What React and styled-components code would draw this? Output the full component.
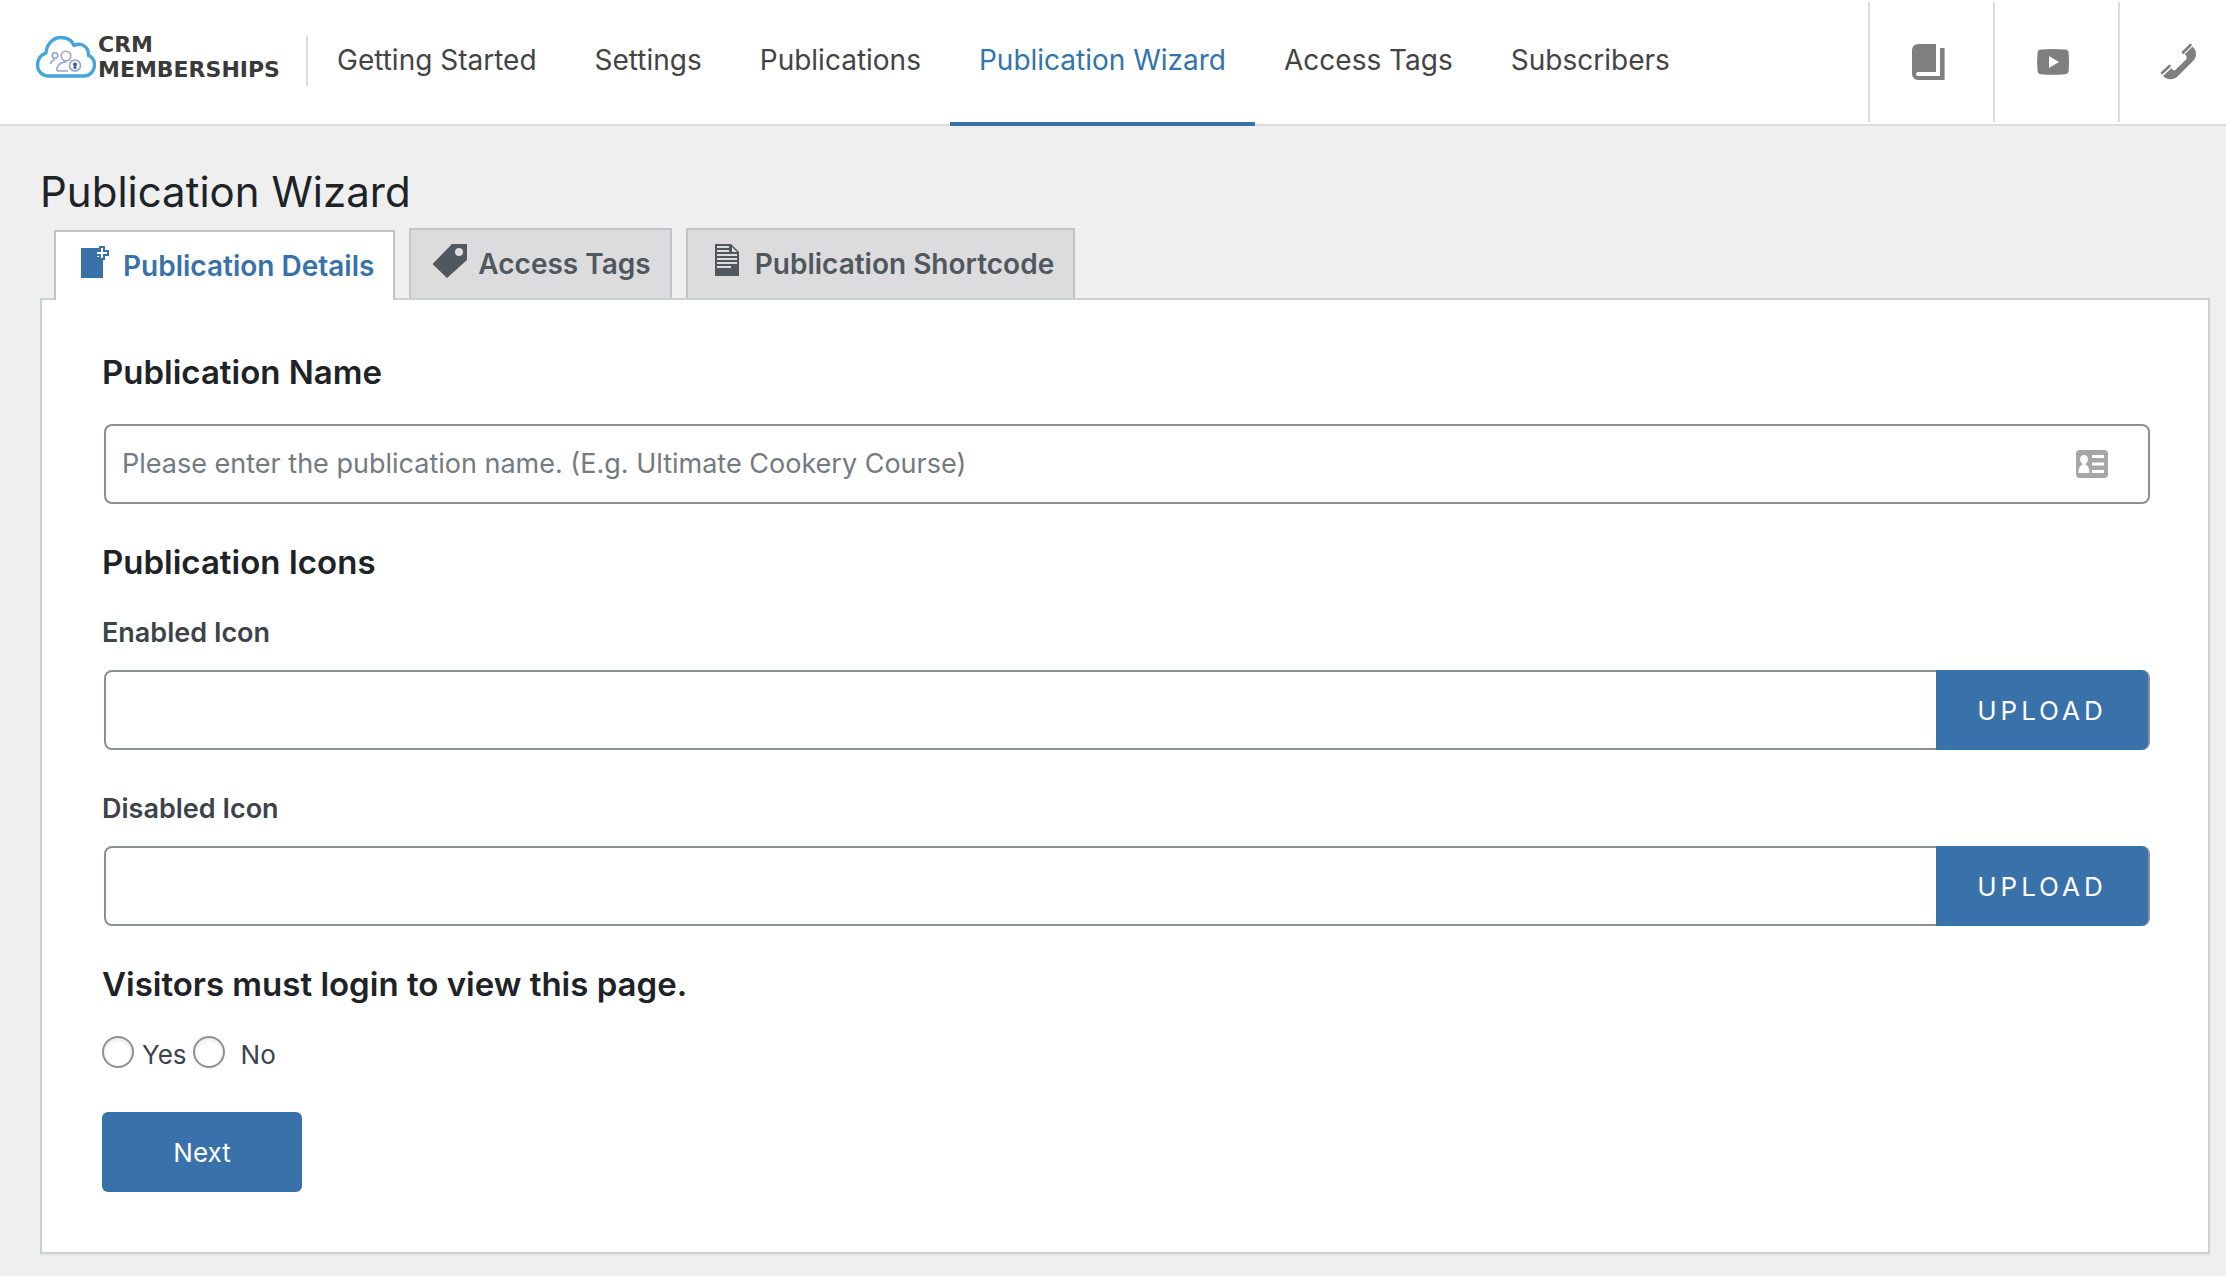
import React from 'react';
import styled, { createGlobalStyle, css } from 'styled-components';

const GlobalStyle = createGlobalStyle`
  *,
  *::before,
  *::after {
    box-sizing: border-box;
  }

  body {
    margin: 0;
    background: #efefef;
    color: #3c434a;
    font-family: Inter, 'Liberation Sans', sans-serif;
    font-size: 26px;
    line-height: 38px;
  }
`;

const StyledHeader = styled.header`
  display: flex;
  height: 126px;
  padding-left: 36px;
  border-bottom: 2px solid #dcdcdc;
  background: #fff;
`;

const StyledLogo = styled.a`
  display: flex;
  align-self: flex-start;
  gap: 2px;
  width: 272px;
  height: 50px;
  margin-top: 36px;
  border-right: 2px solid #dcdcdc;
  color: #3a3a3a;
  font-family: 'DejaVu Sans', Verdana, sans-serif;
  font-size: 22px;
  font-weight: 700;
  line-height: 25px;
  text-decoration: none;

  svg {
    flex: none;
  }
`;

const StyledLogoText = styled.span`
  display: flex;
  flex-direction: column;
  margin-top: -4px;
`;

const StyledNav = styled.nav`
  display: flex;
  margin-bottom: -2px;
`;

const StyledNavLink = styled.a`
  display: flex;
  align-items: center;
  padding: 0 29px 2px;
  border-bottom: 4px solid ${({ $active }) => ($active ? '#3872a9' : 'transparent')};
  color: ${({ $active }) => ($active ? '#3274ab' : '#444')};
  font-size: 28px;
  text-decoration: none;
  white-space: nowrap;
`;

const StyledHelpLinks = styled.div`
  display: flex;
  margin: 2px 0 2px auto;
`;

const StyledHelpLink = styled.a`
  display: flex;
  align-items: center;
  padding: 0 45px 0 38px;
  border-left: 2px solid #dcdcdc;
  color: #7f7f7f;

  &:last-child {
    padding-right: 28px;
  }
`;

const StyledMain = styled.main`
  padding: 36px 16px 22px 40px;
`;

const StyledTitle = styled.h1`
  margin: 0;
  padding-bottom: 6px;
  font-size: 42px;
  font-weight: 400;
  line-height: 60px;
  color: #1d2327;
`;

const StyledTabs = styled.div`
  display: flex;
  gap: 14px;
  height: 70px;
  padding-left: 14px;
`;

const StyledTab = styled.button`
  display: flex;
  align-items: center;
  gap: 8px;
  padding: 0 19px;
  border: 2px solid #c3c4c7;
  border-bottom: 0;
  background: #dcdcde;
  color: #50575e;
  font: inherit;
  font-size: 28px;
  font-weight: 600;
  white-space: nowrap;

  svg {
    margin-bottom: 8px;
  }

  ${({ $active }) =>
    $active &&
    css`
      position: relative;
      margin: 2px 0 -2px;
      background: #fff;
      color: #3872a9;
    `}
`;

const StyledPanel = styled.form`
  padding: 50px 58px 60px 60px;
  border: 2px solid #ccd0d4;
  background: #fff;
  box-shadow: 0 2px 2px rgba(0, 0, 0, 0.04);
`;

const StyledHeading = styled.h2`
  margin: 0 0 30px;
  font-size: 33px;
  font-weight: 600;
  line-height: 44px;
  color: #1d2327;
`;

const StyledLabel = styled.label`
  display: block;
  margin-bottom: 18px;
  font-size: 27px;
  font-weight: 600;
`;

const StyledField = styled.div`
  display: flex;
  height: 80px;
  margin: 0 0 ${({ $gap }) => $gap}px 2px;
`;

const StyledInput = styled.input`
  flex: 1;
  min-width: 0;
  padding: 0 16px;
  border: 2px solid #8c8f94;
  border-right: 0;
  border-radius: 8px 0 0 8px;
  outline: 0;
  background: #fff;
  color: #2c3338;
  font: inherit;
  font-size: 27px;

  &::placeholder {
    color: #757a80;
    opacity: 1;
  }
`;

const StyledAddon = styled.span`
  display: flex;
  align-items: center;
  padding-right: 40px;
  border: 2px solid #8c8f94;
  border-left: 0;
  border-radius: 0 8px 8px 0;
`;

const StyledUpload = styled.button`
  width: 214px;
  padding: 2px 0 0;
  border: 0;
  border-right: 2px solid #8c8f94;
  border-radius: 0 8px 8px 0;
  background: #3971ab;
  color: #fff;
  font: inherit;
  letter-spacing: 4px;
  text-transform: uppercase;
`;

const StyledChoices = styled.div`
  display: flex;
  gap: 6px;
  margin-bottom: 38px;
`;

const StyledChoice = styled.label`
  display: flex;
  gap: ${({ $gap }) => $gap}px;
`;

const StyledRadio = styled.input`
  width: 32px;
  height: 32px;
  margin: 0;
  appearance: none;
  border: 2px solid #8c8f94;
  border-radius: 50%;
  background: #fff;
  box-shadow: inset 0 2px 4px rgba(0, 0, 0, 0.1);

  &:checked {
    border-color: #3971ab;
    background: radial-gradient(#3971ab 45%, #fff 50%);
  }
`;

const StyledNext = styled.button`
  width: 200px;
  height: 80px;
  padding: 2px 0 0;
  border: 0;
  border-radius: 6px;
  background: #3971ab;
  color: #fff;
  font: inherit;
`;

const CloudIcon = () => (
  <svg width="60" height="42" viewBox="0 0 60 42" fill="none" aria-hidden="true">
    <path
      d="M13 40C6 40 1.500 35 1.500 29C1.500 23 5 18.500 10 17C10.500 8 17 1.500 25 1.500C31 1.500 36 4.500 38 9.500C45 6 53 10.500 52.500 19.500C56.500 21 58.500 25 58.500 29C58.500 35.500 53.500 40 47.500 40Z"
      stroke="#48a5dc"
      strokeWidth="3.400"
      strokeLinejoin="round"
    />
    <g stroke="#93a3cf" strokeWidth="1.600">
      <circle cx="30" cy="20" r="4.800" />
      <circle cx="19" cy="19.500" r="2.800" />
      <path d="M32 35H23C20.500 35 20.500 33 21.500 31C23 27.500 26 26 30.500 26" />
      <path d="M14.500 28C15 25.500 16.500 24 19 23.500" />
      <circle cx="39" cy="29.500" r="5.500" />
    </g>
    <path d="M39 26.500a2 2 0 0 1 1.200 3.600l.5 2.700h-3.400l.5-2.700a2 2 0 0 1 1.200-3.600z" fill="#3c5aa6" />
  </svg>
);

const BookIcon = () => (
  <svg width="40" height="40" viewBox="0 0 40 40" fill="currentColor" aria-hidden="true">
    <path d="M10 2h18v28H10a2 2 0 0 0 0 4h22V6h4.600v32H10a6 6 0 0 1-6-6V8a6 6 0 0 1 6-6z" />
  </svg>
);

const VideoIcon = () => (
  <svg width="40" height="40" viewBox="0 0 40 40" fill="currentColor" aria-hidden="true">
    <path
      fillRule="evenodd"
      d="M8 7.500Q20 6.500 32 7.500Q35.500 7.800 35.700 11Q36.300 20 35.700 28.500Q35.500 32 32 32.200Q20 33.200 8 32.200Q4.800 32 4.500 28.500Q3.700 20 4.500 11Q4.800 7.800 8 7.500zM16 14v12l10-6z"
    />
  </svg>
);

const PhoneIcon = () => (
  <svg width="40" height="40" viewBox="0 0 40 40" fill="currentColor" aria-hidden="true">
    <path d="M34.500 4.500C39 9 39 14.500 35.500 18.500L20.500 33.500C16 38.500 9.500 38.500 5 34L13.500 26C14 28 15.500 28.700 17 28.200L28.500 17C29.300 15 28.500 13.500 26.500 12.500Z" />
    <path d="M25 10.500L32.500 3M4 31L11.500 24" stroke="currentColor" strokeWidth="2.600" strokeLinecap="round" />
  </svg>
);

const AddPageIcon = () => (
  <svg width="40" height="40" viewBox="0 0 40 40" fill="currentColor" aria-hidden="true">
    <path d="M6 6h18v4h-2v5h6v21H6z" />
    <path d="M24 4h6v4h4v6h-4v4h-6v-4h-2V8h2z" />
    <path d="M27 6v10M22 11h10" stroke="#fff" strokeWidth="2" />
  </svg>
);

const TagIcon = () => (
  <svg width="40" height="40" viewBox="0 0 40 40" fill="currentColor" aria-hidden="true">
    <path fillRule="evenodd" d="M22 4h15v16L17 38L2.500 24zM29 8a4 4 0 1 0 .01 8a4 4 0 1 0-.01-8z" />
  </svg>
);

const TextPageIcon = () => (
  <svg width="40" height="40" viewBox="0 0 40 40" aria-hidden="true">
    <path d="M8 4h16l8 8v24H8z" fill="currentColor" />
    <path d="M10 7h12M10 11h12M10 15h20M10 19h20M10 23h20M10 27h14" stroke="#dcdcde" strokeWidth="2" />
    <path d="M25 7v5h5z" fill="#dcdcde" />
  </svg>
);

const CardIcon = () => (
  <svg width="32" height="28" viewBox="0 0 32 28" aria-hidden="true">
    <rect width="32" height="28" rx="4" fill="#a6a6a6" />
    <ellipse cx="8" cy="9.500" rx="4" ry="4.500" fill="#fff" />
    <path d="M6.500 13h3v1.500c3 1.500 4 4 4 8.500h-11c0-4.500 1-7 4-8.500z" fill="#fff" />
    <path d="M16 6.500h12M16 14h12M16 21.500h12" stroke="#fff" strokeWidth="3" />
  </svg>
);

const navItems = [
  'Getting Started',
  'Settings',
  'Publications',
  'Publication Wizard',
  'Access Tags',
  'Subscribers',
];

const tabs = [
  { name: 'Publication Details', Icon: AddPageIcon },
  { name: 'Access Tags', Icon: TagIcon },
  { name: 'Publication Shortcode', Icon: TextPageIcon },
];

const Header = () => (
  <StyledHeader>
    <StyledLogo href="#home">
      <CloudIcon />
      <StyledLogoText>
        <span>CRM</span>
        <span>MEMBERSHIPS</span>
      </StyledLogoText>
    </StyledLogo>
    <StyledNav>
      {navItems.map((item) => (
        <StyledNavLink key={item} href="#nav" $active={item === 'Publication Wizard'}>
          {item}
        </StyledNavLink>
      ))}
    </StyledNav>
    <StyledHelpLinks>
      <StyledHelpLink href="#docs" aria-label="Documentation">
        <BookIcon />
      </StyledHelpLink>
      <StyledHelpLink href="#videos" aria-label="Videos">
        <VideoIcon />
      </StyledHelpLink>
      <StyledHelpLink href="#support" aria-label="Support">
        <PhoneIcon />
      </StyledHelpLink>
    </StyledHelpLinks>
  </StyledHeader>
);

const UploadField = ({ id, label, gap }) => (
  <>
    <StyledLabel htmlFor={id}>{label}</StyledLabel>
    <StyledField $gap={gap}>
      <StyledInput id={id} type="text" />
      <StyledUpload type="button">Upload</StyledUpload>
    </StyledField>
  </>
);

const App = () => (
  <>
    <GlobalStyle />
    <Header />
    <StyledMain>
      <StyledTitle>Publication Wizard</StyledTitle>
      <StyledTabs>
        {tabs.map(({ name, Icon }, index) => (
          <StyledTab key={name} type="button" $active={index === 0}>
            <Icon />
            {name}
          </StyledTab>
        ))}
      </StyledTabs>
      <StyledPanel>
        <StyledHeading>
          <label htmlFor="name">Publication Name</label>
        </StyledHeading>
        <StyledField $gap={36}>
          <StyledInput
            id="name"
            type="text"
            placeholder="Please enter the publication name. (E.g. Ultimate Cookery Course)"
          />
          <StyledAddon>
            <CardIcon />
          </StyledAddon>
        </StyledField>
        <StyledHeading>Publication Icons</StyledHeading>
        <UploadField id="enabled-icon" label="Enabled Icon" gap={40} />
        <UploadField id="disabled-icon" label="Disabled Icon" gap={36} />
        <StyledHeading id="login">Visitors must login to view this page.</StyledHeading>
        <StyledChoices role="radiogroup" aria-labelledby="login">
          <StyledChoice $gap={8}>
            <StyledRadio type="radio" name="login" value="yes" />
            Yes
          </StyledChoice>
          <StyledChoice $gap={16}>
            <StyledRadio type="radio" name="login" value="no" />
            No
          </StyledChoice>
        </StyledChoices>
        <StyledNext type="button">Next</StyledNext>
      </StyledPanel>
    </StyledMain>
  </>
);

export default App;
